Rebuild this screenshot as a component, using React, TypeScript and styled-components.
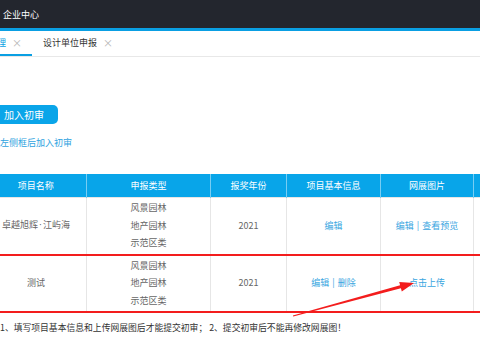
import React from "react";
import styled, { createGlobalStyle } from "styled-components";

const Global = createGlobalStyle`
  html, body { margin: 0; padding: 0; background: #fff; }
  body {
    font-family: "Noto Sans CJK SC", "Noto Sans", sans-serif;
    font-size: 9px;
    color: #666;
  }
`;

const Page = styled.div`
  position: relative;
  width: 480px;
  height: 360px;
  overflow: hidden;
  background: #fff;
`;

const TopBar = styled.header`
  height: 28px;
  background: #23262e;
  border-bottom: 3px solid #0a9fe3;
  display: flex;
  align-items: center;
  padding-left: 3px;
  color: #fff;
  font-size: 9px;
`;

const TabBar = styled.nav`
  height: 25px;
  display: flex;
  margin-left: -41px;
  border-bottom: 1px solid #e8e8e8;
`;

const Tab = styled.div<{ $active?: boolean }>`
  box-sizing: border-box;
  height: 100%;
  display: flex;
  align-items: center;
  gap: 6px;
  padding: 0 10px 0 11px;
  color: ${(p) => (p.$active ? "#0a9fe3" : "#333")};
  border-bottom: 2px solid ${(p) => (p.$active ? "#0a9fe3" : "transparent")};
  background: #fff;
`;

const Close = styled.span`
  color: #b5b5b5;
  font-size: 10px;
`;

const Content = styled.main`
  margin-left: -15px;
  padding-top: 48px;
`;

const ActionButton = styled.button`
  display: block;
  margin-left: 5px;
  height: 19px;
  padding: 0 14px;
  border: none;
  border-radius: 5px;
  background: #0aa5e9;
  color: #fff;
  font-family: inherit;
  font-size: 10px;
  line-height: 19px;
`;

const Hint = styled.div`
  margin: 10px 0 0 -3px;
  line-height: 18px;
  color: #2fa3e0;
  font-size: 9px;
`;

const Table = styled.table`
  margin-top: 22px;
  border-collapse: collapse;
  table-layout: fixed;
  width: 568px;
`;

const Th = styled.th`
  height: 23px;
  padding: 0;
  background: #08a5e9;
  color: #fff;
  font-weight: normal;
  font-size: 9px;
  border-left: 1px solid rgba(255, 255, 255, 0.45);
  &:first-child { border-left: none; }
`;

const Td = styled.td<{ $mark?: boolean }>`
  border: 1px solid #e6e6e6;
  border-top: ${(p) => (p.$mark ? "2px solid #f31d1d" : "1px solid #e6e6e6")};
  border-bottom: ${(p) => (p.$mark ? "2px solid #f31d1d" : "1px solid #e6e6e6")};
  text-align: center;
  vertical-align: middle;
  padding: 1px 0 2px;
  line-height: 17.5px;
  color: #666;
  font-size: 9px;
`;

const Line = styled.div``;

const Dot = styled.span`
  font-family: "DejaVu Sans", sans-serif;
  margin: 0 1px;
`;

const Link = styled.span`
  color: #3aa6df;
`;

const Sep = styled.span`
  color: #3aa6df;
  margin: 0 3px;
`;

const Note = styled.p`
  margin: 8px 0 0;
  padding-left: 15px;
  line-height: 14px;
  font-size: 8.8px;
  color: #333;
`;

const Arrow = styled.svg`
  position: absolute;
  left: 0;
  top: 0;
  pointer-events: none;
`;

const widths = [101, 124, 76, 94, 93, 80];
const headers = ["项目名称", "申报类型", "报奖年份", "项目基本信息", "网展图片", ""];
const types = ["风景园林", "地产园林", "示范区类"];

export default function App() {
  return (
    <Page>
      <Global />
      <TopBar>企业中心</TopBar>
      <TabBar>
        <Tab $active>
          项目管理<Close>×</Close>
        </Tab>
        <Tab>
          设计单位申报<Close>×</Close>
        </Tab>
      </TabBar>
      <Content>
        <ActionButton>加入初审</ActionButton>
        <Hint>勾选左侧框后加入初审</Hint>
        <Table>
          <colgroup>
            {widths.map((w, i) => (
              <col key={i} style={{ width: w }} />
            ))}
          </colgroup>
          <thead>
            <tr>
              {headers.map((h, i) => (
                <Th key={i}>{h}</Th>
              ))}
            </tr>
          </thead>
          <tbody>
            <tr>
              <Td>
                卓越旭辉<Dot>·</Dot>江屿海
              </Td>
              <Td>
                {types.map((t) => (
                  <Line key={t}>{t}</Line>
                ))}
              </Td>
              <Td>2021</Td>
              <Td>
                <Link>编辑</Link>
              </Td>
              <Td>
                <Link>编辑</Link>
                <Sep>|</Sep>
                <Link>查看预览</Link>
              </Td>
              <Td />
            </tr>
            <tr>
              <Td $mark>测试</Td>
              <Td $mark>
                {types.map((t) => (
                  <Line key={t}>{t}</Line>
                ))}
              </Td>
              <Td $mark>2021</Td>
              <Td $mark>
                <Link>编辑</Link>
                <Sep>|</Sep>
                <Link>删除</Link>
              </Td>
              <Td $mark>
                <Link>点击上传</Link>
              </Td>
              <Td $mark />
            </tr>
          </tbody>
        </Table>
        <Note>1、填写项目基本信息和上传网展图后才能提交初审； 2、提交初审后不能再修改网展图！</Note>
      </Content>
      <Arrow width="480" height="360" viewBox="0 0 480 360">
        <polygon
          points="292.9,315.6 400.1,285.2 399.2,281.9 414,283 401.8,291.5 400.9,288.2 293.2,316.6"
          fill="#f31d1d"
        />
      </Arrow>
    </Page>
  );
}
